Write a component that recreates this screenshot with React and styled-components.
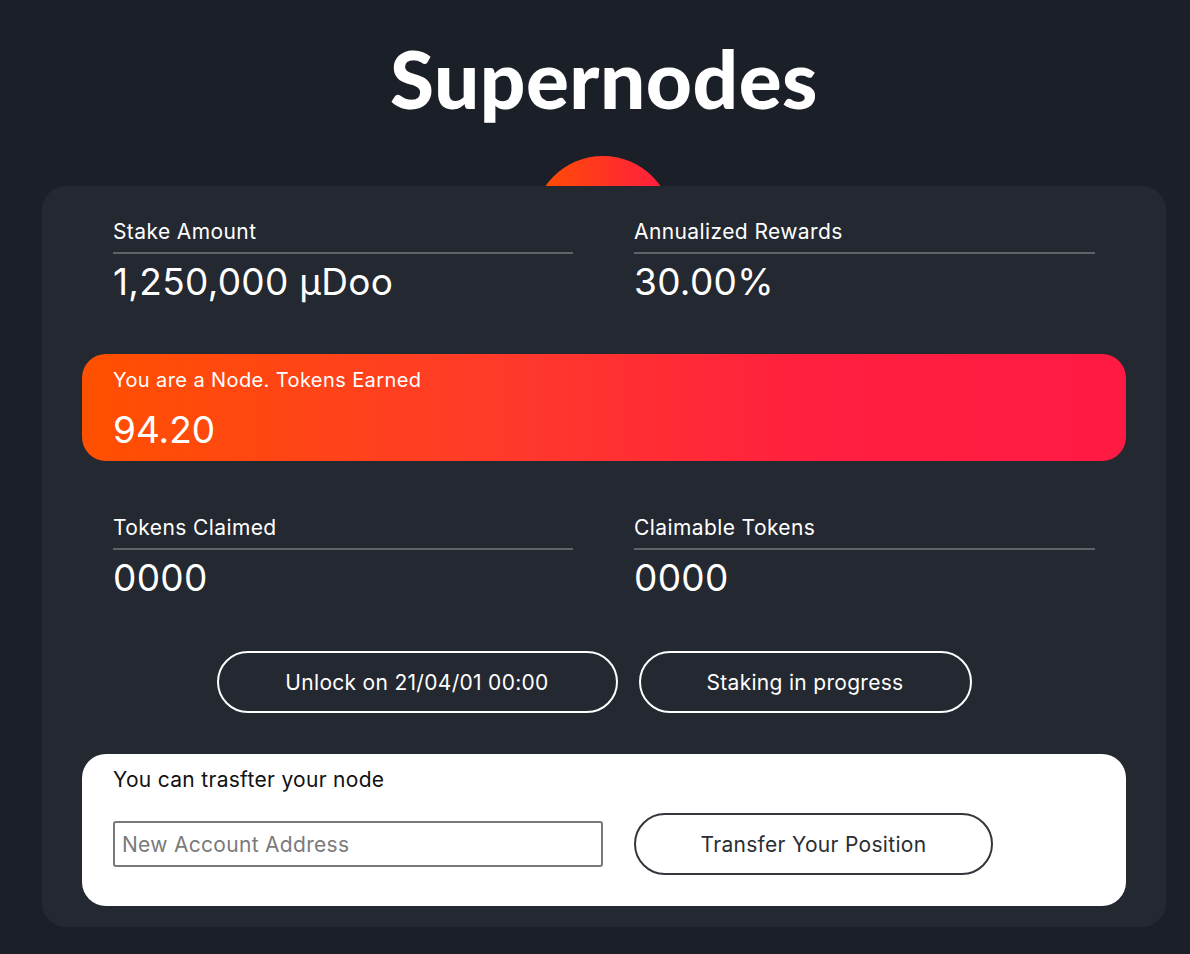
import React from "react";
import styled, { createGlobalStyle } from "styled-components";

const GlobalStyle = createGlobalStyle`
    html, body {
        margin: 0;
        padding: 0;
        background: #1b1f27;
    }
    body {
        font-family: "Inter", "Noto Sans", sans-serif;
        color: #ffffff;
    }
`;

const Page = styled.div`
    width: 1190px;
    min-height: 954px;
    padding: 28px 24px 28px 42px;
    box-sizing: border-box;
    display: flex;
    flex-direction: column;
    align-items: stretch;
`;

const Title = styled.h1`
    margin: 0;
    text-align: center;
    font-family: "Lato", sans-serif;
    font-size: 80px;
    font-weight: 900;
    line-height: 100px;
    letter-spacing: 0.5px;
    color: #ffffff;
`;

const Stage = styled.div`
    position: relative;
    margin-top: 28px;
    width: 1124px;
`;

const Sun = styled.div`
    position: absolute;
    top: 0;
    left: 491px;
    width: 140px;
    height: 140px;
    border-radius: 50%;
    background: linear-gradient(90deg, #ff5000 0%, #ff1a44 100%);
`;

const Card = styled.div`
    position: relative;
    margin-top: 30px;
    background: #242830;
    border-radius: 24px;
    padding: 30px 40px 21px;
    display: flex;
    flex-direction: column;
`;

const StatRow = styled.div`
    display: grid;
    grid-template-columns: 460px 461px;
    column-gap: 61px;
    padding: 0 31px;
`;

const Stat = styled.div`
    display: flex;
    flex-direction: column;
`;

const Label = styled.div`
    font-size: 21px;
    letter-spacing: 0.4px;
    line-height: 32px;
    padding-bottom: 4px;
    border-bottom: 2px solid #5f6268;
`;

const Value = styled.div`
    font-size: 37px;
    letter-spacing: 0.3px;
    line-height: 56px;
`;

const Banner = styled.div`
    margin: 44px 0 51px;
    height: 107px;
    box-sizing: border-box;
    border-radius: 24px;
    padding: 12px 31px 0;
    background: linear-gradient(90deg, #ff5000 0%, #ff3a2a 40%, #ff1f3f 70%, #ff1a44 100%);
`;

const BannerLabel = styled.div`
    font-size: 20px;
    letter-spacing: 0.4px;
    line-height: 28px;
`;

const BannerValue = styled.div`
    margin-top: 8px;
    font-size: 37px;
    line-height: 56px;
`;

const Actions = styled.div`
    display: flex;
    justify-content: center;
    gap: 21px;
    margin-top: 45px;
    padding-right: 20px;
`;

const PillButton = styled.button`
    width: ${(p) => p.$w}px;
    height: 62px;
    border-radius: 31px;
    background: ${(p) => (p.$light ? "#ffffff" : "transparent")};
    border: 2px solid ${(p) => (p.$light ? "#33363b" : "#ffffff")};
    color: ${(p) => (p.$light ? "#2a2d32" : "#ffffff")};
    font-family: inherit;
    font-size: 21px;
    letter-spacing: 0.3px;
    cursor: pointer;
`;

const TransferPanel = styled.div`
    margin-top: 41px;
    background: #ffffff;
    border-radius: 24px;
    padding: 10px 31px 31px;
    color: #111111;
`;

const PanelTitle = styled.div`
    font-size: 21px;
    letter-spacing: 0.3px;
    line-height: 32px;
`;

const PanelRow = styled.div`
    display: flex;
    align-items: center;
    gap: 31px;
    margin-top: 17px;
`;

const AddressInput = styled.input`
    width: 490px;
    height: 46px;
    box-sizing: border-box;
    border: 2px solid #76787b;
    border-radius: 3px;
    padding: 0 7px;
    font-family: inherit;
    font-size: 21px;
    letter-spacing: 0.3px;
    color: #222222;
    outline: none;
    &::placeholder {
        color: #7a7a7a;
    }
`;

export default function App() {
    return (
        <>
            <GlobalStyle />
            <Page>
                <Title>Supernodes</Title>
                <Stage>
                    <Sun />
                    <Card>
                        <StatRow>
                            <Stat>
                                <Label>Stake Amount</Label>
                                <Value>1,250,000 µDoo</Value>
                            </Stat>
                            <Stat>
                                <Label>Annualized Rewards</Label>
                                <Value>30.00%</Value>
                            </Stat>
                        </StatRow>
                        <Banner>
                            <BannerLabel>You are a Node. Tokens Earned</BannerLabel>
                            <BannerValue>94.20</BannerValue>
                        </Banner>
                        <StatRow>
                            <Stat>
                                <Label>Tokens Claimed</Label>
                                <Value>0000</Value>
                            </Stat>
                            <Stat>
                                <Label>Claimable Tokens</Label>
                                <Value>0000</Value>
                            </Stat>
                        </StatRow>
                        <Actions>
                            <PillButton $w={401}>Unlock on 21/04/01 00:00</PillButton>
                            <PillButton $w={333}>Staking in progress</PillButton>
                        </Actions>
                        <TransferPanel>
                            <PanelTitle>You can trasfter your node</PanelTitle>
                            <PanelRow>
                                <AddressInput placeholder="New Account Address" />
                                <PillButton $w={359} $light>Transfer Your Position</PillButton>
                            </PanelRow>
                        </TransferPanel>
                    </Card>
                </Stage>
            </Page>
        </>
    );
}
